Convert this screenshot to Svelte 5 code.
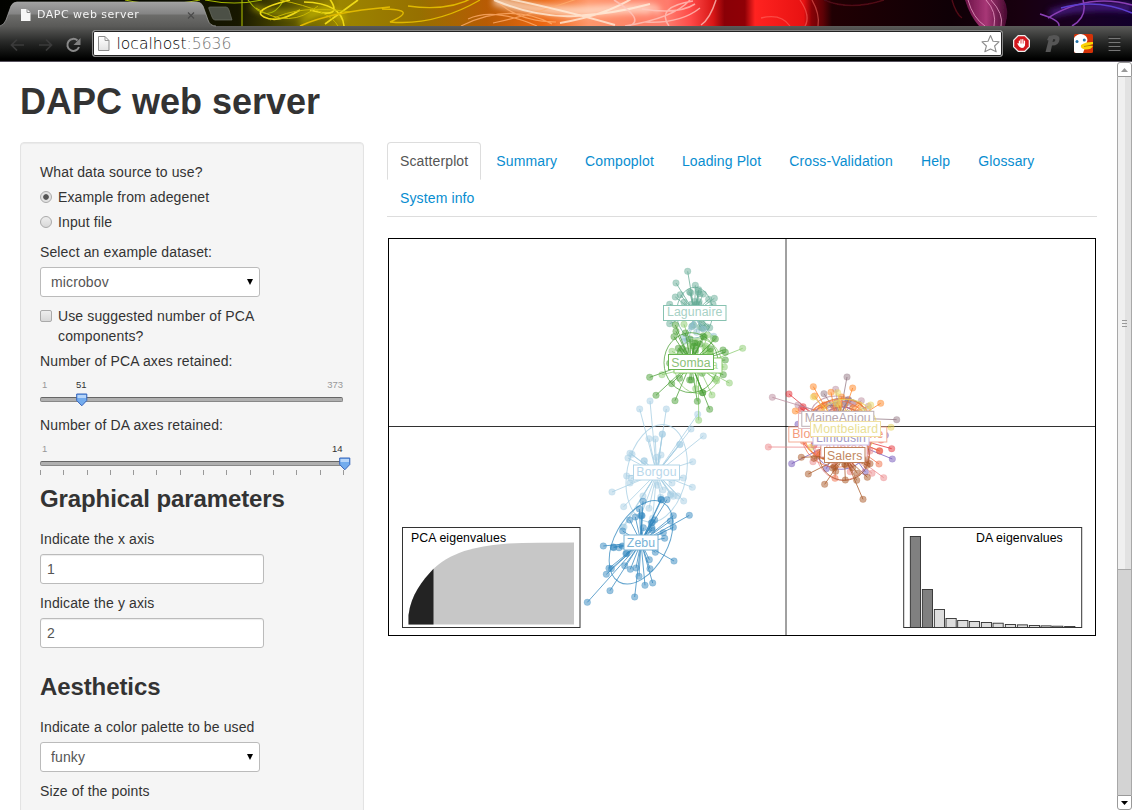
<script>
  const tabs = ['Scatterplot', 'Summary', 'Compoplot', 'Loading Plot', 'Cross-Validation', 'Help', 'Glossary', 'System info'];
  const ticks = Array.from({ length: 14 }, (_, i) => i);

  // deterministic pseudo random numbers for the dense centres of the clusters
  function rng(seed) {
    let s = seed;
    return () => {
      s = (s * 16807) % 2147483647;
      return s / 2147483647;
    };
  }
  function cloud(cx, cy, rx, ry, n, seed) {
    const r = rng(seed * 7919);
    return Array.from({ length: n }, () => {
      const a = r() * Math.PI * 2;
      const d = 0.3 + 0.7 * Math.sqrt(r());
      return [cx + Math.cos(a) * rx * d, cy + Math.sin(a) * ry * d];
    });
  }

  const north = [
    { c: '#66ab96', cx: 374, cy: 173, rx: 54, ry: 76, rot: 0,
      pts: [[353,49],[318,84],[376,91],[316,126],[331,119],[299,148],[359,111],[362,113],[386,104],[400,117],[385,110],[416,133],[433,130],[429,148],[299,206],[419,218],[400,220],[397,206],[366,214],[371,210],[388,116],[342,142],[409,215], ...cloud(374, 178, 44, 60, 14, 11)] },
    { c: '#92c1cf', cx: 374, cy: 190, rx: 0, ry: 0, rot: 0, pts: [[366,215],[380,232],[431,244],[344,259],[354,256],[341,246],[400,222]] },
    { c: '#8acb6d', cx: 385, cy: 333, rx: 71, ry: 82, rot: 0,
      pts: [[518,280],[342,208],[306,289],[276,359],[440,377],[478,384],[426,420],[386,496],[463,336],[412,240],[377,401],[435,372],[430,250], ...cloud(385, 325, 55, 65, 14, 7)] },
    { c: '#4a9f35', cx: 363, cy: 323, rx: 81, ry: 90, rot: 0,
      pts: [[239,367],[258,421],[315,437],[382,439],[419,463],[316,210],[318,229],[312,245],[436,252],[421,281],[459,285],[466,292],[466,315],[460,359],[398,413],[398,413],[305,386],[364,375],[359,375],[329,370],[373,265],[360,252],[399,243],[402,246],[325,280],[331,290],[299,325],[346,234], ...cloud(363, 315, 50, 58, 16, 29)] }
  ];
  const south = [
    { c: '#a6cee3', cx: 260, cy: 250, rx: 89, ry: 148, rot: 11,
      pts: [[240,33],[209,57],[289,57],[383,73],[363,117],[400,138],[277,132],[277,133],[237,146],[256,147],[330,163],[329,164],[180,190],[186,193],[174,204],[273,195],[223,212],[222,213],[368,215],[170,258],[183,265],[180,279],[126,306],[340,264],[367,292],[161,350],[341,333],[302,315],[310,319],[323,318],[219,318],[237,355],[306,279],[262,286],[272,322],[162,411],[158,412],[212,378],[260,202],[279,300],[302,312],[248,385]] },
    { c: '#3388bf', cx: 213, cy: 457, rx: 79, ry: 136, rot: 29,
      pts: [[219,334],[274,330],[291,329],[273,328],[208,357],[310,377],[358,376],[179,390],[196,381],[214,376],[216,377],[254,390],[247,397],[244,399],[301,393],[310,412],[158,423],[220,413],[246,414],[246,420],[280,428],[284,445],[100,468],[130,471],[131,473],[147,473],[157,468],[168,491],[170,490],[256,487],[312,513],[238,509],[164,527],[117,535],[124,536],[109,553],[181,538],[198,534],[240,536],[207,559],[225,586],[248,579],[120,602],[194,621],[52,637]] }
  ];
  const east = [
    { c: '#e52f36', cx: 245, cy: 205, rx: 108, ry: 83, rot: 8,
      pts: [[102,87],[144,125],[378,225],[410,251],[374,258],[139,132], ...cloud(245, 199, 105, 70, 14, 87)] },
    { c: '#7456ba', cx: 260, cy: 220, rx: 89, ry: 93, rot: 16,
      pts: [[110,296],[412,282],[391,211],[129,178],[214,311],[331,321], ...cloud(260, 218, 83, 80, 8, 111)] },
    { c: '#bb8c9d', cx: 254, cy: 158, rx: 88, ry: 64, rot: 10,
      pts: [[52,97],[242,73],[129,120],[319,107],[340,124],[280,104], ...cloud(257, 154, 77, 52, 16, 53)] },
    { c: '#937784', cx: 254, cy: 158, rx: 78, ry: 58, rot: -10,
      pts: [[276,36],[207,86],[425,164],[280,104], ...cloud(245, 150, 60, 52, 9, 71)] },
    { c: '#ff8320', cx: 250, cy: 195, rx: 105, ry: 92, rot: -20,
      pts: [[175,65],[293,69],[228,82],[377,115],[121,138],[179,93],[260,96],[312,120], ...cloud(250, 160, 80, 52, 26, 41)] },
    { c: '#f06f47', cx: 245, cy: 207, rx: 105, ry: 100, rot: 0,
      pts: [[240,340],[372,297],[373,257],[145,229], ...cloud(247, 215, 95, 92, 14, 93)] },
    { c: '#ead75f', cx: 273, cy: 190, rx: 93, ry: 87, rot: -8,
      pts: [[408,187],[175,96],[347,120],[248,83],[168,247], ...cloud(270, 192, 82, 80, 9, 103)] },
    { c: '#eb8588', cx: 263, cy: 247, rx: 83, ry: 99, rot: 0,
      pts: [[40,246],[386,338],[351,325],[338,293],[174,290], ...cloud(268, 243, 84, 87, 13, 123)] },
    { c: '#aa5725', cx: 268, cy: 272, rx: 75, ry: 74, rot: 0,
      pts: [[160,327],[209,358],[324,403],[271,345],[305,346],[337,337],[139,277],[233,309],[238,305],[269,298],[272,300],[307,325],[293,308],[336,301],[177,280],[332,282],[242,319],[345,296], ...cloud(268, 269, 62, 45, 13, 137)] }
  ];
  const layers = [
    { x: 570, y: 390, groups: south },
    { x: 570, y: 255, groups: north },
    { x: 755, y: 365, groups: east }
  ];
  // the plot labels, from the one at the back to the one in front
  const labels = [
    { t: 'Lagunaire', x: 663.5, y: 305.5, w: 62.5, h: 15, c: '#a8d1c5', b: '#88c2b1', dy: -0.9 },
    { t: 'Ndama', x: 674, y: 358, w: 48, h: 15, c: '#b4dfa0', b: '#8acb6d' },
    { t: 'Somba', x: 668.5, y: 354.5, w: 45, h: 15, c: '#8bc179', b: '#68b451', dy: 1 },
    { t: 'Borgou', x: 633.5, y: 465, w: 46, h: 15, c: '#b9d8eb', b: '#b2d5e8' },
    { t: 'Zebu', x: 624, y: 535, w: 34, h: 15, c: '#78b2d6', b: '#79b1d4', dy: 0.7 },
    { t: 'BlondeAquitaine', x: 788.8, y: 427, w: 98, h: 15, c: '#f49b7c', b: '#f5ad96' },
    { t: '', x: 799, y: 412, w: 69, h: 15, c: '#ed9b96', b: '#efaaa5' },
    { t: '', x: 798.5, y: 413.5, w: 74, h: 15, c: '#ddb1b7', b: '#e5bec3' },
    { t: 'MaineAnjou', x: 801.8, y: 411.3, w: 72, h: 15, c: '#b6a6ae', b: '#baaeb6', dy: -0.4 },
    { t: 'Aubrac', x: 821, y: 442, w: 46, h: 15, c: '#edacad', b: '#ebb2b2', dy: -1 },
    { t: 'Limousin', x: 813, y: 431, w: 56, h: 14, c: '#a39ac8', b: '#c8bce4' },
    { t: 'Montbeliard', x: 810.5, y: 421.5, w: 70, h: 15, c: '#eadf97', b: '#f0e0a3' },
    { t: 'Salers', x: 824.5, y: 447.5, w: 40.5, h: 15, c: '#c28862', b: '#bf805b', dy: 1 }
  ];
  const daBars = [[46,64],[82,223],[118,283],[153,310],[188,316],[223,319],[259,322],[294,324],[331,328],[367,329],[403,331],[438,332],[473,333],[509,334]];
</script>

<div class="window">
  <header>
    <div class="strip">
      <svg class="art" width="1132" height="26" viewBox="0 0 1132 26">
        <defs>
          <linearGradient id="sky" x1="0" x2="1132" y1="0" y2="0" gradientUnits="userSpaceOnUse">
            <stop offset="0" stop-color="#020300" /><stop offset=".13" stop-color="#090c00" /><stop offset=".21" stop-color="#171700" />
            <stop offset=".25" stop-color="#4b4800" /><stop offset=".3" stop-color="#9c8600" /><stop offset=".37" stop-color="#967000" />
            <stop offset=".43" stop-color="#b85b04" /><stop offset=".48" stop-color="#ec6813" /><stop offset=".52" stop-color="#ff976b" />
            <stop offset=".56" stop-color="#ff8468" /><stop offset=".59" stop-color="#ff7b6c" /><stop offset=".61" stop-color="#ff4a48" />
            <stop offset=".63" stop-color="#d81616" /><stop offset=".64" stop-color="#8a0006" /><stop offset=".658" stop-color="#8f0006" />
            <stop offset=".667" stop-color="#ff2320" /><stop offset=".71" stop-color="#e81212" /><stop offset=".717" stop-color="#8a0207" />
            <stop offset=".727" stop-color="#5d0206" /><stop offset=".735" stop-color="#200003" />
            <stop offset=".84" stop-color="#0f0006" /><stop offset=".9" stop-color="#18000f" /><stop offset=".96" stop-color="#180025" /><stop offset="1" stop-color="#12002b" />
          </linearGradient>
          <linearGradient id="plume" x1="0" x2="1" y1="0" y2="0"><stop stop-color="#7c1552" /><stop offset=".5" stop-color="#c2408a" /><stop offset="1" stop-color="#4e0a36" /></linearGradient>
          <filter id="soft" x="-5%" y="-50%" width="110%" height="200%"><feGaussianBlur stdDeviation=".7" /></filter>
          <filter id="haze" x="-5%" y="-50%" width="110%" height="200%"><feGaussianBlur stdDeviation="3" /></filter>
        </defs>
        <rect width="1132" height="26" fill="url(#sky)" />
        <g fill="none" filter="url(#haze)">
          <path d="M252 6Q280 20 330 8M300 24Q330 2 344 20" stroke="#e0d000" stroke-width="5" opacity=".6" />
          <path d="M494 0Q540 14 600 10T655 12" stroke="#ffe6d6" stroke-width="10" opacity=".75" />
          <path d="M1050 14Q1080 4 1132 8" stroke="#4a1b86" stroke-width="7" />
        </g>
        <g fill="none" filter="url(#soft)">
          <path d="M125 0Q160 8 200 0M205 0Q235 6 262 0M242 0V26M248 0Q268 27 284 0" stroke="#a6b800" stroke-width="1.1" />
          <path d="M290 0Q250 10 264 17T300 10M304 2Q342 3 344 26M310 10Q345 20 329 -2M325 24L358 0" stroke="#efda18" stroke-width="1.6" />
          <path d="M256 8Q290 30 318 6M280 0Q330 10 338 26M270 20Q300 4 350 12" stroke="#c7b600" stroke-width="1" />
          <path d="M300 26Q330 12 390 7M382 9Q420 9 390 22Q435 26 480 0M408 6Q450 12 476 -4" stroke="#e0b800" stroke-width="1.4" />
          <path d="M468 19Q493 7 537 26M500 4Q522 22 556 22M493 23Q531 15 580 -2M461 26Q510 2 552 24" stroke="#ffac6c" stroke-width="1.2" opacity=".8" />
          <path d="M494 0Q537 18 575 16T650 4M505 -2Q568 11 615 25M560 23Q607 15 636 -4" stroke="#fff0df" stroke-width="2" opacity=".75" />
          <path d="M614 0Q646 20 629 26M625 26Q674 18 690 0M669 26Q655 7 693 1M642 9Q678 15 695 4M701 25Q710 19 716 0M645 22Q680 24 700 8" stroke="#ffc8c0" stroke-width="1.5" opacity=".75" />
          <path d="M800 0Q811 16 805 26M812 0Q820 14 818 26M761 18Q781 13 790 26" stroke="#ff756e" stroke-width="1.3" opacity=".5" />
          <path d="M824 0Q850 11 884 0M952 0Q956 14 962 18" stroke="#4d0914" stroke-width="1.5" />
          <path d="M965 0Q970 16 979 26H1005Q1010 10 1004 0Z" fill="url(#plume)" opacity=".85" />
          <path d="M968 0Q973 18 985 26M986 0Q997 12 994 26M991 0Q1004 14 1001 26" stroke="#e99cc4" stroke-width="1" opacity=".8" />
          <path d="M1040 14Q1060 20 1059 26M1048 18Q1088 -7 1132 5M1083 0Q1088 17 1072 26" stroke="#8a3fb5" stroke-width="1.5" />
          <path d="M1061 8Q1097 -2 1132 13" stroke="#5d3fd0" stroke-width="1.6" />
        </g>
      </svg>
      <svg class="tabshape" width="236" height="27" viewBox="0 0 236 27">
        <defs><linearGradient id="tabg" x1="0" x2="0" y1="0" y2="1"><stop stop-color="#a2a2a2" /><stop offset=".48" stop-color="#848484" /><stop offset=".52" stop-color="#6c6c6a" /><stop offset="1" stop-color="#595957" /></linearGradient></defs>
        <path d="M0 26Q4 25 6 20L11 6Q13 2 17 2H197Q201 2 203 6L208 20Q210 26 216 26V27H0Z" fill="url(#tabg)" />
        <path d="M0 26Q4 25 6 20L11 6Q13 2 17 2H197Q201 2 203 6L208 20Q210 26 216 26" fill="none" stroke="#aaa" stroke-width=".7" />
        <path d="M210 7H226Q228 7 229 10L232 20H215Q213 20 212 17L209 9Q208 7 210 7" fill="#4c5046" stroke="#6d7064" stroke-width=".7" />
        <path d="M21 9H27L30.5 12.5V21H21Z" fill="#f6f6f6" /><path d="M27 9V12.5H30.5" fill="none" stroke="#888" />
        <path d="M188 12.5L194 18.5M194 12.5L188 18.5" stroke="#4b4b4b" stroke-width="1.2" />
      </svg>
      <span class="tabtitle">DAPC web server</span>
    </div>
    <div class="toolbar">
      <svg width="92" height="36" viewBox="0 26 92 36">
        <path d="M24 45H12M17 39.5L11.5 45L17 50.5M39 45H51M46 39.5L51.5 45L46 50.5" fill="none" stroke="#3b3b3b" stroke-width="1.7" />
        <path d="M77.5 40.5A6 6 0 1 0 79 47" fill="none" stroke="#8a8a8a" stroke-width="2" />
        <path d="M80.5 38V45H73.5Z" fill="#808080" />
      </svg>
      <div class="address">
        <svg width="22" height="25" viewBox="94 31 22 25">
          <defs><linearGradient id="pg" x1="0" x2="0" y1="0" y2="1"><stop stop-color="#fff" /><stop offset="1" stop-color="#e2e2e2" /></linearGradient></defs>
          <path d="M99.5 36.5H106L110 40.5V50.5H99.5Z" fill="url(#pg)" stroke="#8c8c8c" /><path d="M106 36.5V40.5H110" fill="none" stroke="#999" />
        </svg>
        <span class="url">localhost<i>:5636</i></span>
        <svg class="star" width="22" height="22" viewBox="979 33 22 22"><path d="M990.5 35.5L993 41.2L999 41.8L994.6 46L996.2 51.8L990.5 49L984.8 51.8L986.4 46L982 41.8L988 41.2Z" fill="#fff" stroke="#8d8d8d" stroke-width="1.1" stroke-linejoin="round" /></svg>
      </div>
      <svg width="129" height="36" viewBox="1003 26 129 36">
        <path d="M1018 35H1025L1030 40V47L1025 52H1018L1013 47V40Z" fill="#eee" />
        <path d="M1018.5 36.3H1024.5L1028.7 40.5V46.5L1024.5 50.7H1018.5L1014.3 46.5V40.5Z" fill="#d3171d" />
        <path d="M1019.4 44V41M1021 43.5V39.7M1022.8 43.5V39.5M1024.5 44V41" stroke="#fff" stroke-width="1.2" stroke-linecap="round" />
        <path d="M1017.5 43L1019 43.5H1025V45.5Q1024 48 1022 48Q1019 47.5 1017.5 44Z" fill="#fff" />
        <path d="M1049 36L1054 35Q1060 35 1059.5 39.5Q1059 45.5 1052 45.5L1050.5 52H1045.5L1048.5 40.5L1047 40ZM1053.2 39L1052.5 42Q1055.2 42 1055.4 40Q1055.4 38.8 1053.2 39" fill="#565656" fill-rule="evenodd" />
        <rect x="1074" y="34" width="19" height="19" rx="1.5" fill="#d43208" />
        <path d="M1074 38Q1077 34 1081 34Q1087 35 1087.5 40Q1086 46 1083 53H1076Q1074 53 1074 51Z" fill="#fff" />
        <circle cx="1077" cy="41.5" r="1.5" fill="#2272a8" /><circle cx="1084.3" cy="40" r="1.5" fill="#2272a8" />
        <path d="M1081 45Q1086 41.5 1093 42V44L1087.5 46H1093Q1091 50 1085 49.5Q1080 48.5 1081 45" fill="#fbd305" /><path d="M1084 46.5L1092 45" stroke="#a88500" stroke-width=".8" />
        <path d="M1109 38.5H1120M1109 42.5H1120M1109 46.5H1120M1109 50.5H1120" stroke="#777" stroke-width="1.1" stroke-linecap="round" />
        <path d="M1108 37H1121M1108 41H1121M1108 45H1121M1108 49H1121" stroke="#222" />
      </svg>
    </div>
  </header>

  <div class="viewport">
    <div class="page">
      <h1>DAPC web server</h1>
      <div class="columns">
        <form class="well">
          <p>What data source to use?</p>
          <label class="choice"><span class="radio on"></span>Example from adegenet</label>
          <label class="choice"><span class="radio"></span>Input file</label>
          <p class="datalabel">Select an example dataset:</p>
          <div class="select">microbov<svg width="8" height="8" viewBox="0 0 8 8"><path d="M1 1H7L4 7Z" /></svg></div>
          <label class="choice suggested"><span class="check"></span><span>Use suggested number of PCA<br />components?</span></label>
          <p>Number of PCA axes retained:</p>
          <div class="slider first">
            <div class="nums"><span>1</span><span>373</span></div><b style="left:36px">51</b>
            <div class="track"></div>
            <svg class="knob" style="left:36px" width="12" height="14" viewBox="0 0 12 14"><path d="M.7 1H10.8V7.5L5.8 12.8L.7 7.5Z" fill="#73acee" stroke="#3764ba" /><path d="M1.5 2H10V5H1.5Z" fill="#b7d5f9" /></svg>
          </div>
          <p>Number of DA axes retained:</p>
          <div class="slider">
            <div class="nums"><span>1</span></div><b style="left:292px">14</b>
            <div class="track"></div>
            <svg class="knob" style="left:299px" width="12" height="14" viewBox="0 0 12 14"><path d="M.7 1H10.8V7.5L5.8 12.8L.7 7.5Z" fill="#73acee" stroke="#3764ba" /><path d="M1.5 2H10V5H1.5Z" fill="#b7d5f9" /></svg>
            <div class="ticks">{#each ticks as t (t)}<i></i>{/each}</div>
          </div>
          <h3>Graphical parameters</h3>
          <p>Indicate the x axis</p>
          <div class="input">1</div>
          <p>Indicate the y axis</p>
          <div class="input">2</div>
          <h3 class="aes">Aesthetics</h3>
          <p>Indicate a color palette to be used</p>
          <div class="select">funky<svg width="8" height="8" viewBox="0 0 8 8"><path d="M1 1H7L4 7Z" /></svg></div>
          <p class="points">Size of the points</p>
        </form>

        <main>
          <nav>
            {#each tabs as tab, i (tab)}<a class:active={i === 0}>{tab}</a>{/each}
          </nav>
          <svg class="plot" width="710" height="400" viewBox="387 237 710 400">
            <path d="M786 238V636" stroke="#222" stroke-width="1" opacity=".85" /><path d="M388 426.5H1096" stroke="#000" stroke-width="1" opacity=".8" />
            {#each layers as layer}
              <g transform="translate({layer.x} {layer.y}) scale(.33333)">
                {#each layer.groups as g}
                  <g stroke={g.c} fill={g.c} stroke-width="3">
                    {#each g.pts as p}
                      <line x1={g.cx} y1={g.cy} x2={p[0]} y2={p[1]} opacity=".75" />
                      <circle cx={p[0]} cy={p[1]} r="9.8" fill-opacity=".5" stroke-opacity=".3" stroke-width="2.2" />
                    {/each}
                    <ellipse cx={g.cx} cy={g.cy} rx={g.rx} ry={g.ry} transform="rotate({g.rot} {g.cx} {g.cy})" fill="none" opacity=".75" />
                  </g>
                {/each}
              </g>
            {/each}
            {#each labels as l}
              <rect x={l.x} y={l.y} width={l.w} height={l.h} fill="#fff" stroke={l.b} />
              {#if l.t}<text x={l.x + l.w / 2} y={l.y + 11.2 + (l.dy ?? 0)} text-anchor="middle" fill={l.c}>{l.t}</text>{/if}
            {/each}
            <rect x="388.5" y="238.5" width="707" height="397" fill="none" stroke="#000" />

            <rect x="402.5" y="527.5" width="177.5" height="100" fill="#fff" stroke="#333" />
            <path d="M408.5 624.5V615C411 595 422 581 433.5 568.7C455 549 482 546 508 543.5Q535 542.5 574 542.5V624.5Z" fill="#c7c7c7" />
            <path d="M408.5 624.5V615C411 595 422 581 433.5 568.7V624.5Z" fill="#232323" />
            <text x="411" y="542" fill="#000">PCA eigenvalues</text>

            <rect x="903.7" y="527.5" width="178" height="100" fill="#fff" stroke="#333" />
            {#each daBars as b, i}
              <rect x={895 + b[0] / 3} y={515.2 + b[1] / 3} width="10.2" height={(337 - b[1]) / 3} fill={i < 2 ? '#808080' : '#dedede'} stroke="#2f2f2f" stroke-width=".9" />
            {/each}
            <text x="976" y="542" fill="#000">DA eigenvalues</text>
          </svg>
        </main>
      </div>
    </div>
    <div class="scroll">
      <div class="btn"><svg width="9" height="6" viewBox="0 0 9 6"><path d="M1 5H8L4.5 1Z" fill="#999" /></svg></div>
      <div class="thumb"><i></i><i></i><i></i></div>
      <div class="rail"></div>
      <div class="btn down"><svg width="9" height="6" viewBox="0 0 9 6"><path d="M1 1H8L4.5 5Z" /></svg></div>
    </div>
  </div>
</div>

<style>
  :global(body) { background: #fff; overflow: hidden; }
  .window { width: 1132px; height: 810px; overflow: hidden; display: flex; flex-direction: column; font: 14px/20px "Liberation Sans", Arial, sans-serif; letter-spacing: .125px; color: #333; }
  .window * { box-sizing: border-box; }
  svg { display: block; flex: none; }
  header { height: 62px; flex: none; }
  .strip { height: 26px; position: relative; }
  .art, .tabshape { position: absolute; left: 0; top: 0; }
  .tabtitle { position: absolute; left: 37px; top: 5px; color: #f4f4f4; font: 11px/20px "DejaVu Sans", sans-serif; letter-spacing: .5px; white-space: nowrap; }
  .toolbar { height: 36px; display: flex; background: linear-gradient(#5b5b59, #282928 45%, #070807 85%, #000 94%); border-bottom: 1px solid #56515d; }
  .address { width: 911px; height: 27px; margin-top: 4px; border: 1px solid #888; border-radius: 3px; background: #fff; display: flex; align-items: center; box-shadow: inset 0 0 0 1px #222; }
  .url { font: 200 15.6px/24px "DejaVu Sans", sans-serif; letter-spacing: 0; color: #000; flex: 1; margin-left: 1.5px; }
  .url i { font-style: normal; color: #777; }
  .star { margin-right: 1px; }
  .viewport { flex: 1; min-height: 0; display: flex; }
  .page { width: 1117px; padding: 20px; height: 748px; overflow: hidden; }
  h1 { margin: 0 0 20px; font-size: 36px; line-height: 40px; height: 40px; letter-spacing: 0; }
  .columns { display: flex; gap: 23px; }
  .well { width: 344px; height: 720px; padding: 19px; border: 1px solid #e3e3e3; border-radius: 4px; background: #f5f5f5; box-shadow: inset 0 1px 1px rgba(0,0,0,.05); flex: none; }
  p { margin: 0 0 5px; height: 20px; }
  .choice { display: flex; height: 20px; margin-bottom: 5px; }
  .radio, .check { width: 12px; height: 12px; margin: 4px 6px 0 0; border: 1px solid #aaa; background: linear-gradient(#eee, #d8d8d8); flex: none; }
  .radio { border-radius: 50%; }
  .on { background: radial-gradient(circle, #555 0 2.4px, #e2e2e2 3.2px); }
  .check { border-radius: 2px; }
  .datalabel { margin-top: 10px; }
  .select, .input { height: 30px; border: 1px solid #bbb; border-radius: 3px; background: #fff; color: #555; line-height: 28px; }
  .select { width: 220px; padding: 0 5px 0 10px; display: flex; align-items: center; justify-content: space-between; }
  .select svg { fill: #000; }
  .suggested { height: 40px; margin: 9px 0 5px; }
  .slider { position: relative; height: 44px; margin-top: -5px; padding-top: 8px; font-size: 9.5px; letter-spacing: 0; }
  .slider.first { height: 39px; margin-bottom: 5px; }
  .nums { width: 303px; display: flex; justify-content: space-between; padding: 0 0 0 2px; color: #999; line-height: 12px; height: 18px; }
  .slider b { position: absolute; top: 8px; font-weight: 400; line-height: 12px; }
  .track { width: 303px; height: 5px; border: 1px solid #888; border-top-color: #666; border-radius: 2px; background: #b0b0b0; }
  .knob { position: absolute; top: 22px; }
  .ticks { width: 304px; height: 5px; margin-top: 4px; display: flex; justify-content: space-between; }
  .ticks i { width: 1px; background: #999; }
  h3 { margin: 0 0 10px; font-size: 24px; line-height: 40px; height: 40px; letter-spacing: -.1px; }
  .input { width: 224px; padding-left: 6px; margin-bottom: 9px; box-shadow: inset 0 1px 1px rgba(0,0,0,.075); }
  .aes { margin-top: 19px; }
  .points { margin-top: 9px; }
  main { width: 710px; }
  nav { display: flex; flex-wrap: wrap; height: 75px; border-bottom: 1px solid #ddd; align-content: flex-start; }
  nav a { height: 38px; margin: 0 2px -1px 0; padding: 8px 12px; border: 1px solid transparent; color: #088dd0; border-radius: 4px 4px 0 0; }
  nav a.active { color: #555; border-color: #ddd; border-bottom-color: transparent; }
  .plot { margin-top: 20px; }
  .plot text { font-family: "Liberation Sans", Arial, sans-serif; font-size: 12.3px; letter-spacing: .1px; }
  .scroll { width: 15px; height: 748px; display: flex; flex-direction: column; }
  .btn { height: 15px; border: 1px solid #999; border-radius: 3px 3px 0 0; display: flex; align-items: center; justify-content: center; background: #fff; }
  .down { border-radius: 0 0 3px 3px; }
  .thumb { height: 493px; border: 1px solid #a8a8a8; border-top: 0; background: linear-gradient(90deg, #f0f0f0 50%, #e2e2e2 50%); display: flex; flex-direction: column; align-items: center; justify-content: center; gap: 2px; }
  .thumb i { width: 5px; height: 1px; background: #999; }
  .rail { flex: 1; background: #d3d3d3; border: 1px solid #a8a8a8; border-width: 0 1px; }
</style>
